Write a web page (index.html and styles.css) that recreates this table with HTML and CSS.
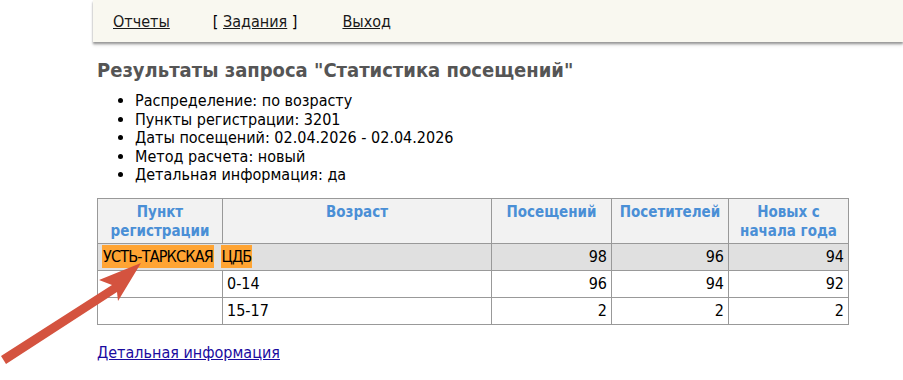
FILE: index.html
```html
<!DOCTYPE html>
<html>
<head>
<meta charset="utf-8">
<link rel="stylesheet" href="styles.css">
</head>
<body>
<div class="topbar">
  <nav class="nav">
    <a href="#">Отчеты</a>
    <span class="cur">[ <a href="#">Задания</a> ]</span>
    <a href="#">Выход</a>
  </nav>
</div>
<main class="content">
  <h1 class="title">Результаты запроса "Статистика посещений"</h1>
  <ul class="params">
    <li>Распределение: по возрасту</li>
    <li>Пункты регистрации: 3201</li>
    <li>Даты посещений: 02.04.2026 - 02.04.2026</li>
    <li>Метод расчета: новый</li>
    <li>Детальная информация: да</li>
  </ul>
  <table class="stats">
    <colgroup>
      <col class="c1"><col class="c2"><col class="c3"><col class="c4"><col class="c5">
    </colgroup>
    <thead>
      <tr><th>Пункт<br>регистрации</th><th>Возраст</th><th>Посещений</th><th>Посетителей</th><th>Новых с<br>начала года</th></tr>
    </thead>
    <tbody>
      <tr class="group"><td colspan="2"><span class="hl">УСТЬ-ТАРКСКАЯ</span> <span class="hl">ЦДБ</span></td><td class="num">98</td><td class="num">96</td><td class="num">94</td></tr>
      <tr><td></td><td>0-14</td><td class="num">96</td><td class="num">94</td><td class="num">92</td></tr>
      <tr><td></td><td>15-17</td><td class="num">2</td><td class="num">2</td><td class="num">2</td></tr>
    </tbody>
  </table>
  <p class="more"><a href="#">Детальная информация</a></p>
</main>
<svg class="arrow" width="160" height="380" viewBox="0 0 160 380">
  <polygon fill="#d4533f" points="141,263 99,280 112,285 1,356 6,364 117,292 118,301"/>
</svg>
</body>
</html>
```
FILE: styles.css
```css
html, body { margin: 0; padding: 0; background: #fff; }
body {
  font-family: "DejaVu Sans", Verdana, sans-serif;
  font-stretch: condensed;
  font-size: 16px;
  color: #000;
  position: relative;
  width: 903px;
  height: 380px;
  overflow: hidden;
}
.topbar {
  margin-left: 93px;
  height: 42px;
  background: #f9f8f0;
  box-shadow: 0 2px 2px #999, 0 4px 3px rgba(0,0,0,0.08);
}
.nav {
  display: flex;
  align-items: center;
  height: 42px;
  padding-left: 20px;
}
.nav a { color: #1a1a1a; }
.nav > a:first-child { margin-right: 43px; }
.nav .cur { margin-right: 45px; }
.content { padding-left: 97px; }
.title {
  margin: 16px 0 0 0;
  font-size: 20px;
  font-weight: bold;
  color: #555;
  line-height: 24px;
}
.params {
  margin: 10px 0 0 0;
  padding-left: 38px;
  line-height: 18.6px;
}
.stats {
  margin-top: 13px;
  border-collapse: collapse;
  width: 752px;
}
.stats col.c1 { width: 125px; }
.stats col.c2 { width: 269px; }
.stats col.c3 { width: 120px; }
.stats col.c4 { width: 117px; }
.stats col.c5 { width: 120px; }
.stats th, .stats td {
  border: 1px solid #999;
  padding: 2px 4px;
}
.stats th {
  background: #f2f2f2;
  color: #4a8fd6;
  font-size: 15px;
  vertical-align: top;
  line-height: 19px;
  height: 37px;
  padding-top: 4px;
}
.stats td { height: 22px; line-height: 22px; }
.stats .group td { background: #e0e0e0; }
.stats td.num { text-align: right; }
.hl {
  background: #ffa433;
  padding: 2px 1px;
  margin-right: 1px;
  letter-spacing: -0.8px;
}
.hl + .hl { margin-left: 1px; }
.more { margin: 18px 0 0 0; }
.more a { color: #1a0ba0; }
.arrow { position: absolute; left: 0; top: 0; }
```
